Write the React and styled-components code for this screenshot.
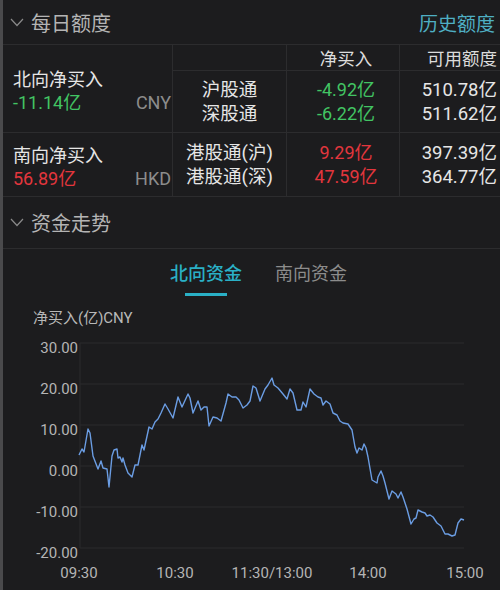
import React from 'react';
import styled, { createGlobalStyle } from 'styled-components';

const Global = createGlobalStyle`
  html, body {
    margin: 0;
    padding: 0;
    background: #1c1c1e;
  }
  * {
    box-sizing: border-box;
  }
`;

const Page = styled.div`
  width: 500px;
  height: 590px;
  overflow: hidden;
  background: #1c1c1e;
  border-left: 3px solid #4a4a4c;
  font-family: Roboto, "Noto Sans CJK SC", sans-serif;
  color: #e2e2e2;
`;

const SectionHead = styled.div`
  height: ${(p) => p.h}px;
  display: flex;
  align-items: center;
  padding: 0 5px 0 7px;
  border-bottom: 1px solid #2c2c2e;
`;

const Title = styled.span`
  margin-left: 7px;
  font-size: 20px;
  color: #b4b4b4;
  flex: 1;
`;

const HistoryLink = styled.span`
  font-size: 19px;
  color: #4fafc4;
`;

const Chevron = () => (
  <svg width="14" height="9" viewBox="0 0 14 9">
    <path d="M1 1 L7 7.5 L13 1" fill="none" stroke="#8a8a8a" strokeWidth="1.2" />
  </svg>
);

const Grid = styled.div`
  display: grid;
  grid-template-columns: 170px 114px 113px 1fr;
  grid-template-rows: 26px 62px 64px;
`;

const Cell = styled.div`
  border-bottom: 1px solid #2c2c2e;
  border-right: ${(p) => (p.last ? 'none' : '1px solid #2c2c2e')};
  display: flex;
  flex-direction: column;
  justify-content: center;
  align-items: ${(p) => p.align || 'center'};
  padding: ${(p) => p.pad || '0'};
  font-size: 18px;
  line-height: 24px;
  ${(p) => p.span && `grid-row: span ${p.span};`}
`;

const HeadText = styled.span`
  font-size: 17.5px;
  color: #dcdcdc;
  margin-top: 2px;
`;

const NameCell = styled(Cell)`
  align-items: stretch;
  line-height: 23px;
  padding: 4px 1px 0 10px;
`;

const Name = styled.div`
  font-size: 18px;
  color: #e6e6e6;
`;

const SubLine = styled.div`
  display: flex;
  justify-content: space-between;
`;

const Amount = styled.span`
  color: ${(p) => (p.up ? '#e3363d' : '#42c463')};
  font-size: 18px;
`;

const Currency = styled.span`
  color: #8c8c8c;
  font-size: 18px;
`;

const Label = styled.span`
  font-size: 18.5px;
  color: #e6e6e6;
`;

const Tabs = styled.div`
  height: 50px;
  display: flex;
  gap: 33px;
  padding-left: 167px;
  padding-top: 13px;
`;

const Tab = styled.div`
  display: flex;
  flex-direction: column;
  align-items: center;
  font-size: 18px;
  line-height: 24px;
  font-weight: ${(p) => (p.active ? 500 : 400)};
  color: ${(p) => (p.active ? '#2ab0c6' : '#8c8c8c')};
  &::after {
    content: '';
    display: block;
    width: 42px;
    height: 3px;
    margin-top: 7px;
    background: ${(p) => (p.active ? '#2ab0c6' : 'transparent')};
  }
`;

const UnitLabel = styled.div`
  height: 31px;
  padding: 8px 0 0 30px;
  font-size: 15px;
  line-height: 22px;
  color: #b8b8b8;
`;

const Chart = styled.svg`
  display: block;
`;

const points = [[79,455],[82,449],[84,452],[88,429],[90,433],[93,456],[98,469],[101,461],[103,468],[107,469],[109,487],[112,456],[114,450],[117,449],[118,458],[120,457],[122,462],[123,458],[125,465],[128,473],[132,477],[135,465],[138,465],[142,445],[144,450],[149,427],[152,429],[155,422],[158,419],[161,413],[165,404],[168,409],[173,418],[178,397],[182,407],[188,394],[190,398],[193,413],[198,401],[201,410],[204,407],[207,407],[209,426],[213,417],[217,418],[221,421],[226,403],[228,394],[232,397],[236,397],[239,400],[243,408],[247,405],[250,401],[253,386],[256,388],[260,401],[265,389],[268,385],[272,378],[274,385],[278,388],[283,394],[287,399],[290,389],[293,393],[297,410],[301,410],[303,402],[306,407],[310,389],[314,394],[318,397],[321,398],[323,405],[326,401],[330,404],[333,413],[337,415],[340,421],[343,423],[348,424],[352,430],[355,447],[357,453],[359,448],[362,450],[364,444],[366,448],[368,457],[372,480],[377,483],[378,477],[381,471],[383,476],[385,483],[389,499],[392,491],[396,494],[398,498],[401,492],[403,497],[407,509],[411,524],[414,519],[416,518],[418,510],[422,512],[425,513],[427,516],[430,515],[433,517],[437,523],[441,526],[445,534],[448,534],[452,536],[455,535],[458,523],[461,519],[464,520]];

const yTicks = ['30.00', '20.00', '10.00', '0.00', '-10.00', '-20.00'];
const xTicks = [['09:30', 79], ['10:30', 175], ['11:30/13:00', 272], ['14:00', 368], ['15:00', 465]];

function FlowChart() {
  return (
    <Chart width="497" height="260" viewBox="3 330 497 260">
      <line x1="80" y1="343" x2="80" y2="548" stroke="#2a2a2c" strokeWidth="1" />
      {yTicks.map((t, i) => (
        <g key={t}>
          <line x1="80" x2="464" y1={343 + 41 * i} y2={343 + 41 * i} stroke="#2a2a2c" strokeWidth="1" />
          <text x="78" y={352.5 + 41 * i} textAnchor="end" fontSize="15" fill="#b5b5b5" fontFamily="Roboto, sans-serif">{t}</text>
        </g>
      ))}
      {xTicks.map(([t, x]) => (
        <text key={t} x={x} y="578" textAnchor="middle" fontSize="15" fill="#b5b5b5" fontFamily="Roboto, sans-serif">{t}</text>
      ))}
      <polyline
        points={points.map((p) => p.join(',')).join(' ')}
        fill="none"
        stroke="#6b9de3"
        strokeWidth="1.4"
        strokeLinejoin="round"
      />
    </Chart>
  );
}

export default function App() {
  return (
    <Page>
      <Global />
      <SectionHead h={45}>
        <Chevron />
        <Title>每日额度</Title>
        <HistoryLink>历史额度</HistoryLink>
      </SectionHead>
      <Grid>
        <NameCell span={2}>
          <Name>北向净买入</Name>
          <SubLine>
            <Amount>-11.14亿</Amount>
            <Currency>CNY</Currency>
          </SubLine>
        </NameCell>
        <Cell />
        <Cell pad="0 0 0 6px"><HeadText>净买入</HeadText></Cell>
        <Cell last align="flex-end" pad="0 3px 0 0"><HeadText>可用额度</HeadText></Cell>
        <Cell>
          <Label>沪股通</Label>
          <Label>深股通</Label>
        </Cell>
        <Cell pad="0 0 0 6px">
          <Amount>-4.92亿</Amount>
          <Amount>-6.22亿</Amount>
        </Cell>
        <Cell last align="flex-end" pad="0 3px 0 0">
          <Label>510.78亿</Label>
          <Label>511.62亿</Label>
        </Cell>
        <NameCell>
          <Name>南向净买入</Name>
          <SubLine>
            <Amount up>56.89亿</Amount>
            <Currency>HKD</Currency>
          </SubLine>
        </NameCell>
        <Cell>
          <Label>港股通(沪)</Label>
          <Label>港股通(深)</Label>
        </Cell>
        <Cell pad="0 0 0 6px">
          <Amount up>9.29亿</Amount>
          <Amount up>47.59亿</Amount>
        </Cell>
        <Cell last align="flex-end" pad="0 3px 0 0">
          <Label>397.39亿</Label>
          <Label>364.77亿</Label>
        </Cell>
      </Grid>
      <SectionHead h={52}>
        <Chevron />
        <Title>资金走势</Title>
      </SectionHead>
      <Tabs>
        <Tab active>北向资金</Tab>
        <Tab>南向资金</Tab>
      </Tabs>
      <UnitLabel>净买入(亿)CNY</UnitLabel>
      <FlowChart />
    </Page>
  );
}
